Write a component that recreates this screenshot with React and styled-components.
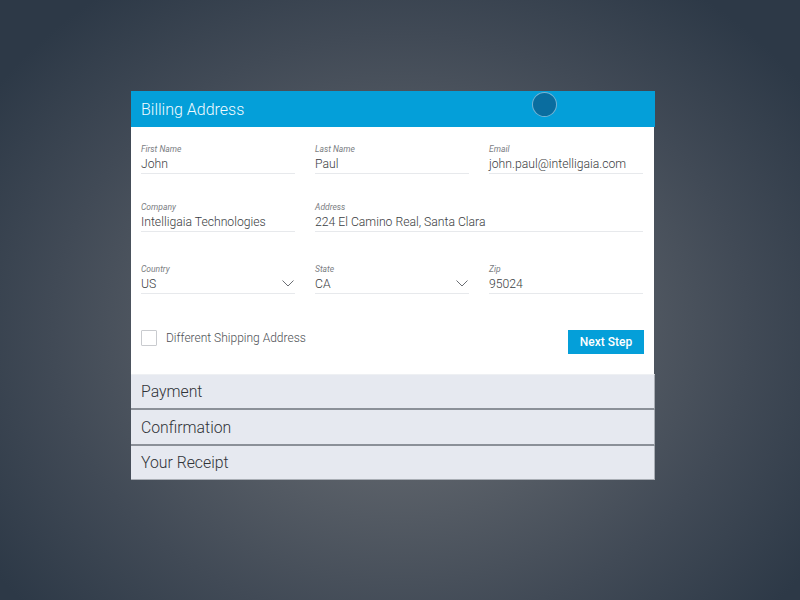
import React from "react";
import styled, { createGlobalStyle } from "styled-components";

const GlobalStyle = createGlobalStyle`
  html, body {
    margin: 0;
    padding: 0;
    height: 100%;
  }
  body {
    font-family: Roboto, "Liberation Sans", Arial, sans-serif;
    background: radial-gradient(
      ellipse 62% 70% at 50% 55%,
      #6c7075 0%,
      #5a6068 35%,
      #414a56 70%,
      #2d3947 100%
    );
    background-color: #2d3947;
  }
`;

const Page = styled.div`
  width: 800px;
  height: 600px;
  box-sizing: border-box;
  padding: 91px 0 0 131px;
`;

const Card = styled.div`
  width: 524px;
  position: relative;
`;

const Header = styled.div`
  height: 36px;
  background: #049fd9;
  display: flex;
  align-items: center;
  padding-left: 10px;
  color: #f2fbff;
  font-size: 16px;
  font-weight: 300;
`;

const Pointer = styled.span`
  position: absolute;
  left: 401px;
  top: 1px;
  width: 23px;
  height: 23px;
  border-radius: 50%;
  background: #0a6d9f;
  border: 1px solid rgba(190, 225, 245, 0.6);
`;

const Body = styled.div`
  background: #ffffff;
  width: 523px;
  box-sizing: border-box;
  padding: 17px 11px 20px 10px;
`;

const FieldRow = styled.div`
  display: grid;
  grid-template-columns: repeat(3, 154px);
  column-gap: 20px;
  margin-bottom: ${(p) => p.$gap || 0}px;
`;

const Field = styled.div`
  grid-column: span ${(p) => p.$span || 1};
  border-bottom: 1px solid #e7e9ec;
`;

const Label = styled.div`
  font-size: 8.5px;
  line-height: 10px;
  font-style: italic;
  color: #7a7d82;
`;

const Value = styled.div`
  display: flex;
  align-items: center;
  justify-content: space-between;
  height: 19px;
  font-size: 12.2px;
  font-weight: 300;
  color: #3a3d42;
`;

const Chevron = () => (
  <svg width="12" height="7" viewBox="0 0 12 7" style={{ marginRight: 1 }}>
    <polyline
      points="0.5,0.5 6,6 11.5,0.5"
      fill="none"
      stroke="#6b6e73"
      strokeWidth="1"
    />
  </svg>
);

const Footer = styled.div`
  display: flex;
  justify-content: space-between;
  align-items: flex-start;
  margin-top: 36px;
`;

const CheckLabel = styled.label`
  display: flex;
  align-items: center;
  gap: 9px;
  font-size: 12px;
  font-weight: 300;
  color: #4d5055;
`;

const Box = styled.span`
  width: 14px;
  height: 14px;
  border: 1px solid #c9cbcf;
  border-radius: 1px;
`;

const NextButton = styled.button`
  width: 76px;
  height: 24px;
  border: none;
  background: #049fd9;
  color: #ffffff;
  font-family: inherit;
  font-size: 12px;
  font-weight: 500;
  padding: 0;
  margin-right: -1px;
  cursor: pointer;
`;

const Step = styled.div`
  height: 36px;
  box-sizing: border-box;
  display: flex;
  align-items: center;
  padding-left: 10px;
  background: #e6e9f0;
  border-right: 1px solid #a9aeb5;
  border-bottom: 2px solid #8b9098;
  border-top: ${(p) => (p.$first ? "1px solid #eef0f3" : "none")};
  font-size: 15.8px;
  font-weight: 300;
  color: #303338;
  &:last-child {
    height: 34px;
    border-bottom: 1px solid #a9aeb5;
  }
`;

const steps = ["Payment", "Confirmation", "Your Receipt"];

export default function App() {
  return (
    <>
      <GlobalStyle />
      <Page>
        <Card>
          <Header>Billing Address</Header>
          <Pointer />
          <Body>
            <FieldRow $gap={28}>
              <Field>
                <Label>First Name</Label>
                <Value>John</Value>
              </Field>
              <Field>
                <Label>Last Name</Label>
                <Value>Paul</Value>
              </Field>
              <Field>
                <Label>Email</Label>
                <Value>john.paul@intelligaia.com</Value>
              </Field>
            </FieldRow>
            <FieldRow $gap={32}>
              <Field>
                <Label>Company</Label>
                <Value>Intelligaia Technologies</Value>
              </Field>
              <Field $span={2}>
                <Label>Address</Label>
                <Value>224 El Camino Real, Santa Clara</Value>
              </Field>
            </FieldRow>
            <FieldRow>
              <Field>
                <Label>Country</Label>
                <Value>
                  US <Chevron />
                </Value>
              </Field>
              <Field>
                <Label>State</Label>
                <Value>
                  CA <Chevron />
                </Value>
              </Field>
              <Field>
                <Label>Zip</Label>
                <Value>95024</Value>
              </Field>
            </FieldRow>
            <Footer>
              <CheckLabel>
                <Box />
                Different Shipping Address
              </CheckLabel>
              <NextButton>Next Step</NextButton>
            </Footer>
          </Body>
          {steps.map((s, i) => (
            <Step key={s} $first={i === 0}>
              {s}
            </Step>
          ))}
        </Card>
      </Page>
    </>
  );
}
